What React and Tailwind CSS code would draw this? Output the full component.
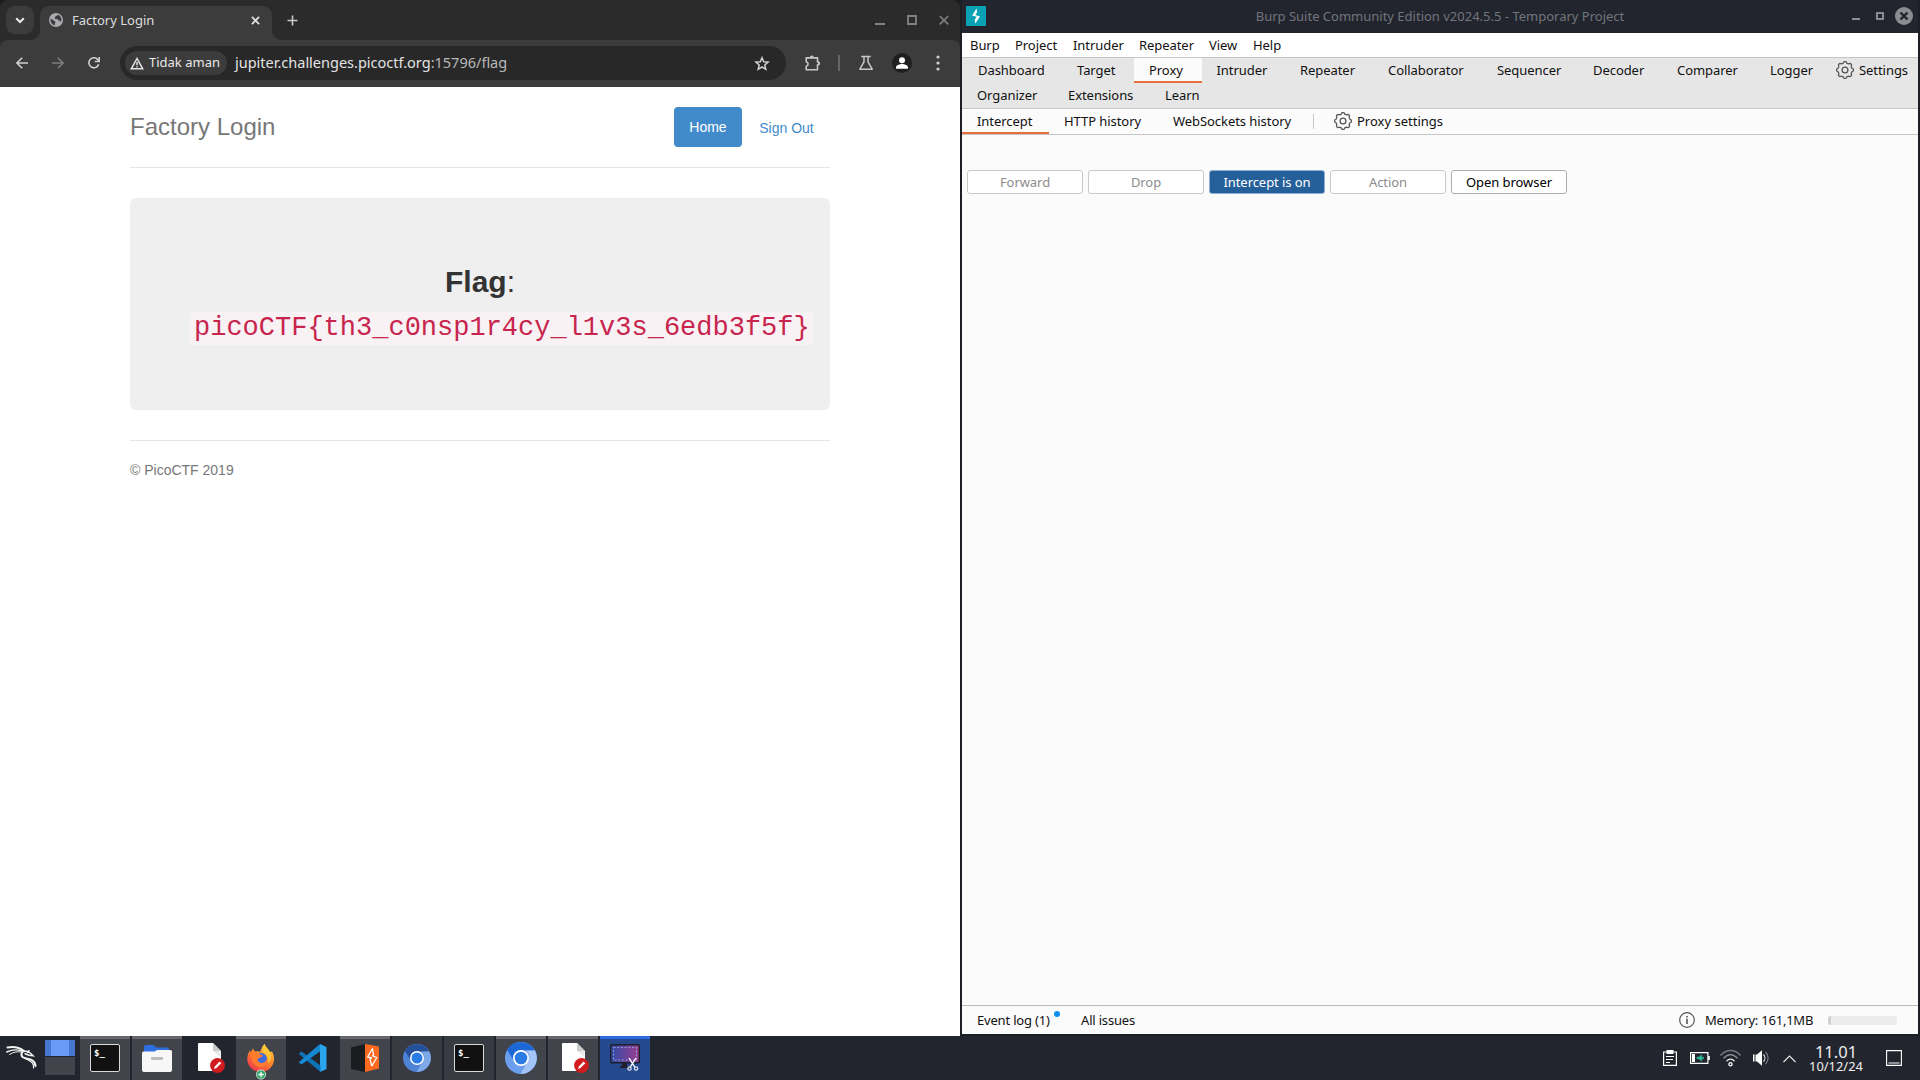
import React from "react";

const NOTO = "font-['Noto_Sans',sans-serif]";
const HELV = "font-['Liberation_Sans',sans-serif]";

function Gear() {
  const pts = [];
  const n = 96;
  for (let i = 0; i <= n; i++) {
    const a = (i / n) * Math.PI * 2;
    const s = Math.cos(a * 8);
    const r = 7.7 + Math.max(-1, Math.min(1, s * 1.6)) * 0.7;
    pts.push(`${(9 + r * Math.cos(a)).toFixed(2)},${(9 + r * Math.sin(a)).toFixed(2)}`);
  }
  return (
    <svg width="18" height="18" viewBox="0 0 18 18" fill="none" stroke="#555" strokeWidth="1.3" className="shrink-0">
      <polygon points={pts.join(" ")} strokeLinejoin="round" />
      <circle cx="9" cy="9" r="2.9" />
    </svg>
  );
}

function TabStrip() {
  return (
    <div className="flex h-10 rounded-t-lg bg-[#2b2b2b] pt-[6px]">
      <div className="ml-[6px] flex size-7 items-center justify-center rounded-[9px] bg-[#3c3c3c]">
        <svg width="10" height="7" viewBox="0 0 10 7" fill="none" stroke="#e8e8e8" strokeWidth="2">
          <path d="M1.2 1.2 5 5l3.8-3.8" />
        </svg>
      </div>
      <div className="relative ml-[6px] flex h-[34px] w-[232px] items-center rounded-t-[9px] bg-[#3c3c3c] pb-[6px]">
        <svg className="absolute bottom-0 left-[-9px]" width="9" height="9" viewBox="0 0 9 9">
          <path d="M9 0v9H0A9 9 0 0 0 9 0z" fill="#3c3c3c" />
        </svg>
        <svg className="absolute right-[-9px] bottom-0" width="9" height="9" viewBox="0 0 9 9">
          <path d="M0 0v9h9A9 9 0 0 1 0 0z" fill="#3c3c3c" />
        </svg>
        <svg className="ml-[9px] shrink-0" width="14" height="14" viewBox="0 0 14 14">
          <circle cx="7" cy="7" r="7" fill="#a9abae" />
          <path d="M1.4 6.3c2.2 0 2.1.2 3.2 1.3.8.8 1.7.4 1.8 1.4 0 1-.6 1.100-.6 1.900v1.500C3 11.600 1.300 9.300 1.400 6.300zM8.800 1.700c-.3 1.300-1 1-1.900 1.200-.9.300-.3 1.300-1 1.800-.5.400-.1 1.200.6 1.200 1.400-.1 2.300.100 2.700 1 .4.900 1.300.4 2 .8.600.300.500 1.200.200 2.100 2-2.700 1.200-6.900-2.600-8.100z" fill="#3c3c3c" />
        </svg>
        <span className="ml-[9px] w-[179px] pb-px text-[13px] leading-5 text-[#dedede]">Factory Login</span>
        <svg className="shrink-0" width="9" height="9" viewBox="0 0 9 9" stroke="#e3e3e3" strokeWidth="1.700">
          <path d="M.9.9l7.200 7.200M8.100.9.9 8.100" />
        </svg>
      </div>
      <svg className="mt-[9px] ml-[14.500px]" width="11" height="11" viewBox="0 0 11 11" stroke="#c9c9c9" strokeWidth="1.600">
        <path d="M5.500.5v10M.5 5.500h10" />
      </svg>
      <div className="mt-[8px] mr-[11px] ml-auto flex gap-[22px]">
        <svg width="10" height="11" viewBox="0 0 10 11"><path d="M0 9h10v2H0z" fill="#818181" /></svg>
        <svg width="10" height="11" viewBox="0 0 10 11"><path d="M1 2h8v8H1z" fill="none" stroke="#818181" strokeWidth="1.800" /></svg>
        <svg width="10" height="11" viewBox="0 0 10 11"><path d="M.8 2l8.400 8.400M9.200 2 .8 10.400" stroke="#818181" strokeWidth="1.700" /></svg>
      </div>
    </div>
  );
}

function Toolbar() {
  return (
    <div className="bg-[#2b2b2b]">
    <div className="flex h-[47px] items-center rounded-t-lg bg-[#3c3c3c] pb-px">
      <svg className="ml-4 shrink-0" width="12" height="12" viewBox="0 0 12 12" fill="none" stroke="#d0d0d0" strokeWidth="1.600">
        <path d="M12 6H1M6.200.7.9 6l5.300 5.300" />
      </svg>
      <svg className="ml-6 shrink-0" width="12" height="12" viewBox="0 0 12 12" fill="none" stroke="#7d7d7d" strokeWidth="1.600">
        <path d="M0 6h11M5.800.7 11.100 6l-5.300 5.300" />
      </svg>
      <svg className="ml-6 shrink-0" width="12" height="12" viewBox="0 0 12 12" fill="none" stroke="#d0d0d0" strokeWidth="1.600">
        <path d="M10.700 7.200A5 5 0 1 1 9.600 2.400L11 4.100" />
        <path d="M11.200 0v4.500H6.700" />
      </svg>
      <div className="ml-5 flex h-[34px] w-[666px] items-center rounded-full bg-[#282828] pr-4 pl-[5px]">
        <div className="flex h-6 w-[102px] shrink-0 items-center rounded-full bg-[#3c3c3c] pl-[5px]">
          <svg className="shrink-0" width="14" height="13" viewBox="0 0 14 13" fill="none" stroke="#e3e3e3" strokeWidth="1.500">
            <path d="M7 1.500 1.300 11.800h11.400z" />
            <path d="M7 5v3.300M7 9.200v1.300" />
          </svg>
          <span className="ml-[5px] text-[13px] whitespace-nowrap text-[#e8e8e8]">Tidak aman</span>
        </div>
        <span className="ml-2 text-[14.500px] whitespace-nowrap text-[#e3e3e3]">
          jupiter.challenges.picoctf.org<span className="text-[#b9b9b9]">:15796/flag</span>
        </span>
        <svg className="ml-auto shrink-0" width="16" height="15" viewBox="0 0 16 15" fill="none" stroke="#d0d0d0" strokeWidth="1.500">
          <path d="M8 1.700l1.700 4 4.400.4-3.300 2.900 1 4.300L8 11l-3.800 2.300 1-4.300L1.900 6.100l4.400-.4z" />
        </svg>
      </div>
      <svg className="ml-[18px] shrink-0" width="18" height="18" viewBox="0 0 18 18">
        <path d="M2.200 3.900h11.300v4c2 0 2.200 2.900 0 3v4.900H2.200v-3.600c2.500-.6 2.500-3.900 0-4.500z" fill="none" stroke="#c7c7c7" strokeWidth="1.600" strokeLinejoin="round" />
        <path d="M5.800 3.500a2 2 0 0 1 4 0zM14 7.500a2 2 0 0 1 0 4z" fill="#c7c7c7" />
      </svg>
      <div className="ml-[16px] h-4 w-[1.500px] bg-[#666]" />
      <svg className="ml-[18px] shrink-0" width="16" height="16" viewBox="0 0 16 16" fill="none" stroke="#c7c7c7" strokeWidth="1.500">
        <path d="M3.200 1.500h9.600M6 1.500v5.300L1.800 14.200h12.400L10 6.800V1.500" strokeLinejoin="round" />
      </svg>
      <svg className="ml-[18px] shrink-0" width="20" height="20" viewBox="0 0 20 20">
        <circle cx="10" cy="10" r="10" fill="#1f1f1f" />
        <circle cx="10" cy="7.200" r="3" fill="#fff" />
        <path d="M4 15.700v-1.400c0-2 3.600-3.300 6-3.300s6 1.300 6 3.300v1.400z" fill="#fff" />
      </svg>
      <svg className="ml-6 shrink-0" width="4" height="16" viewBox="0 0 4 16" fill="#d0d0d0">
        <circle cx="2" cy="2" r="1.600" /><circle cx="2" cy="8" r="1.600" /><circle cx="2" cy="14" r="1.600" />
      </svg>
    </div>
    </div>
  );
}

function Page() {
  return (
    <div className={`${HELV} flex-1 bg-white px-[130px] pt-5 text-sm leading-5`}>
      <div className="flex h-[61px] border-b border-[#e5e5e5]">
        <h3 className="mt-[7px] text-2xl leading-[26px] text-[#777]">Factory Login</h3>
        <div className="ml-auto flex">
          <a className="flex h-10 w-[68px] items-center justify-center rounded bg-[#428bca] text-white">Home</a>
          <a className="mt-px flex h-10 w-[88px] items-center justify-center pl-px text-[#428bca]">Sign Out</a>
        </div>
      </div>
      <div className="mt-[30px] h-[212px] rounded-md bg-[#efefef] px-[60px] pt-[61px] text-[#333]">
        <p className="text-center text-3xl leading-[45px]"><strong>Flag</strong>:</p>
        <div className="mt-[8px] flex text-[27px] leading-[45px]">
          <code className="h-[33px] rounded bg-[#f9f2f4] px-1 font-['Liberation_Mono',monospace] leading-[33px] whitespace-nowrap text-[#c7254e]">
            {"picoCTF{th3_c0nsp1r4cy_l1v3s_6edb3f5f}"}
          </code>
        </div>
      </div>
      <footer className="mt-[30px] border-t border-[#e5e5e5] pt-[19px] text-[#777]">© PicoCTF 2019</footer>
    </div>
  );
}

function Browser() {
  return (
    <section className="flex h-[1036px] w-[960px] shrink-0 flex-col overflow-hidden bg-[#1c1d21]">
      <TabStrip />
      <Toolbar />
      <Page />
    </section>
  );
}

const MENU = [
  ["Burp", "w-[45px]"], ["Project", "w-[58px]"], ["Intruder", "w-[66px]"],
  ["Repeater", "w-[70px]"], ["View", "w-[44px]"], ["Help", "w-[40px]"],
];
const TABS1 = [
  ["Dashboard", "w-[99px]"], ["Target", "w-[57px]"], ["Proxy", ""], ["Intruder", "ml-[14.500px] w-[83.500px]"],
  ["Repeater", "w-[88px]"], ["Collaborator", "w-[109px]"], ["Sequencer", "w-[96px]"],
  ["Decoder", "w-[84px]"], ["Comparer", "w-[93px]"], ["Logger", "w-[75px]"],
];
const BUTTONS = [
  ["Forward", "border-[#c9c9c9] bg-white text-[#8c8c8c]"],
  ["Drop", "border-[#c9c9c9] bg-white text-[#8c8c8c]"],
  ["Intercept is on", "border-[#8fb0d0] bg-[#26609b] text-white"],
  ["Action", "border-[#c9c9c9] bg-white text-[#8c8c8c]"],
  ["Open browser", "border-[#adadad] bg-white text-black"],
];

function Burp() {
  return (
    <section className="flex h-[1036px] w-[960px] shrink-0 flex-col bg-[#1c1f24] pr-[2px] pb-[2px] pl-[2px] text-[13px] leading-[18px] tracking-[-0.06px] whitespace-nowrap text-[#111]">
      <header className="flex h-[33px] shrink-0 bg-[#22252d]">
        <svg className="mt-[6px] ml-[4px] shrink-0" width="20" height="20" viewBox="0 0 20 20">
          <path d="M0 0h20v20H0z" fill="#0aa1b5" />
          <path d="M10.500 2.500 6.200 9.600l4.400 1.200-1.800 3 .4 3.700 4.800-7.100-4.700-1.400 1.800-2.700z" fill="#fff" />
        </svg>
        <div className="flex flex-1 justify-center pt-[7px] tracking-normal text-[#71757c]">
          <span className="ml-[43px]">Burp Suite Community Edition v2024.5.5 - Temporary Project</span>
        </div>
        <svg className="mt-[7px] mr-[5px] shrink-0" width="62" height="18" viewBox="0 0 62 18">
          <path d="M1 11h8v2H1z" fill="#8b8d91" />
          <path d="M26 6h6v6h-6z" fill="none" stroke="#8b8d91" strokeWidth="2" />
          <circle cx="53" cy="9" r="9" fill="#8b8d91" />
          <path d="M49.500 5.500l7 7M56.500 5.500l-7 7" stroke="#22252d" strokeWidth="2.400" />
        </svg>
      </header>
      <nav className="flex h-6 shrink-0 bg-white pt-[3px] pl-2">
        {MENU.map(([t, w]) => <span key={t} className={w}>{t}</span>)}
      </nav>
      <div className="h-[51px] shrink-0 border-t border-[#c6c6c6] bg-[#e6e6e6]">
        <div className="flex h-[25px] pl-4">
          {TABS1.map(([t, w]) =>
            t === "Proxy"
              ? <span key={t} className="h-[25px] w-[68px] border-b-2 border-[#e4703f] bg-[#fbfbfb] pt-[3px] pl-[15px]">{t}</span>
              : <span key={t} className={`${w} pt-[3px]`}>{t}</span>
          )}
          <span className="ml-[-9px] flex gap-[5px] pt-[3px]"><Gear />Settings</span>
        </div>
        <div className="flex pt-[3px] pl-[15px]">
          <span className="w-[91px]">Organizer</span>
          <span className="w-[97px]">Extensions</span>
          <span>Learn</span>
        </div>
      </div>
      <div className="flex h-[27px] shrink-0 border-y border-[#c6c6c6] bg-[#fbfbfb]">
        <span className="h-[25px] w-[87px] border-b-2 border-[#e4703f] pt-[3px] pl-[15px]">Intercept</span>
        <span className="ml-[15px] w-[109px] pt-[3px]">HTTP history</span>
        <span className="w-[140px] pt-[3px]">WebSockets history</span>
        <span className="mt-[5px] h-[15px] w-px bg-[#c6c6c6]" />
        <span className="ml-5 flex gap-[5px] pt-[3px] tracking-normal"><Gear />Proxy settings</span>
      </div>
      <div className="flex-1 bg-[#fbfbfb] pt-[35px] pl-[5px]">
        <div className="flex gap-[5px]">
          {BUTTONS.map(([t, c]) => (
            <div key={t} className={`${c} flex h-6 w-[116px] items-center justify-center rounded-[3px] border`}>{t}</div>
          ))}
        </div>
      </div>
      <footer className="flex h-[29px] shrink-0 items-center border-t border-[#b8b8b8] bg-[#fbfbfb] pl-[15px] tracking-[-0.18px]">
        <span className="w-[77px]">Event log (1)</span>
        <span className="mb-3 size-[6px] rounded-full bg-[#0d8eee]" />
        <span className="ml-[21px]">All issues</span>
        <svg className="ml-auto shrink-0" width="16" height="16" viewBox="0 0 16 16">
          <circle cx="8" cy="8" r="7.300" fill="none" stroke="#555" strokeWidth="1.200" />
          <path d="M7.200 6.800h1.600V12H7.200zM7.200 4h1.600v1.600H7.200z" fill="#555" />
        </svg>
        <span className="ml-[10px] w-[123px] tracking-[-0.22px]">Memory: 161,1MB</span>
        <span className="mr-[21px] flex h-[9px] w-[69px] overflow-hidden rounded-[3px] bg-[#ececec]">
          <span className="h-full w-[3px] bg-[#d0d0d0]" />
        </span>
      </footer>
    </section>
  );
}

function Terminal() {
  return (
    <div className="h-[28px] w-[30px] rounded-[2px] border-[1.500px] border-[#d8d8d8] bg-[#111] pt-[3px] pl-[3px] font-['DejaVu_Sans_Mono',monospace] text-[9px] leading-[11px] font-bold text-white">$_</div>
  );
}

function Files() {
  return (
    <svg width="30" height="27" viewBox="0 0 30 27">
      <path d="M2 2q0-2 2-2h7q1 0 2 1l1 1.500h11q2 0 2 2V9H2z" fill="#2e6fe0" />
      <path d="M0 8q0-1.500 1.500-1.500h11L15 5h13.500Q30 5 30 6.500V25q0 2-2 2H2q-2 0-2-2z" fill="#f7f7f7" />
      <path d="M9 12h12v1.500q0 1.500-1.500 1.500h-9Q9 15 9 13.500z" fill="#bcbcbc" />
    </svg>
  );
}

function Editor() {
  return (
    <svg className="ml-[4px]" width="28" height="30" viewBox="0 0 28 30">
      <path d="M2 0h14l8 8v20H2q-1 0-1-1V1q0-1 1-1z" fill="#fff" />
      <path d="M16 0l7.500 8H16z" fill="#ccc" />
      <path d="M16 8h7.500v6z" fill="#e8e8e8" />
      <circle cx="20.500" cy="22.500" r="7.400" fill="#d01b1f" />
      <path d="M17 26l.8-2.600 4.800-4.800 1.700 1.700-4.800 4.800z" fill="#fff" />
    </svg>
  );
}

function Firefox() {
  return (
    <svg width="30" height="36" viewBox="0 0 30 36">
      <defs>
        <linearGradient id="ff" x1="0.800" y1="0" x2="0.200" y2="1">
          <stop offset="0" stopColor="#ffd23e" /><stop offset=".45" stopColor="#ff8a2a" /><stop offset="1" stopColor="#f0304f" />
        </linearGradient>
      </defs>
      <path d="M18.500 0c1 3.500 4 4.800 5.500 8l2-.5c2.500 4 2.800 9.500.5 13.500C24 25.500 19.500 28 15 28 7.500 28 1.300 22.500 1.300 14.800c0-3.500 1.200-6.300 2.700-8.800l.5 2.800L7 4.500l2 3.200c2-.8 4-.5 5 .300 1.500-3 2-6 4.500-8z" fill="url(#ff)" />
      <circle cx="15" cy="15" r="6" fill="#3e6be0" />
      <path d="M5 10c3-2 7-2 9 .5l3 1c-1 2-3.500 2-5 3-1 1.500.5 4.500 3 4.500 3 0 5-1.500 6-4 .5 5-3 8-7 8S5 19 5 10z" fill="#ff7b2d" />
      <path d="M18.500 0c1 3.500 4 4.800 5.500 8 2 5 .5 9-2 11 .5-5-1-8-4-10-2.500-2.500-2-6 .5-9z" fill="#ffc737" />
      <circle cx="15" cy="30.500" r="4.600" fill="#30a566" stroke="#e8f5ee" strokeWidth=".8" />
      <path d="M15 27.800v5.400M12.300 30.500h5.400" stroke="#fff" strokeWidth="1.300" />
    </svg>
  );
}

function Code() {
  return (
    <svg width="28" height="28" viewBox="0 0 28 28">
      <path d="M21 0l6.500 3v22L21 28z" fill="#2aa5ee" />
      <path d="M0 9.500 2.500 7.500 21.500 21.500V28L.5 10.500z" fill="#0d72b8" />
      <path d="M0 18l21-18v7.500L2.500 20.500 0 18.500z" fill="#1688d3" />
    </svg>
  );
}

function BurpIcon() {
  return (
    <svg width="28" height="28" viewBox="0 0 28 28">
      <path d="M0 3.500 14 0v28L0 25z" fill="#1b1c20" />
      <path d="M14 0l14 2.500v22L14 28z" fill="#ff6a20" />
      <path d="M21.500 4.500 16.500 13l4.500 1-2 .8 1.800 7.200 5-8.500-4.300-1.700 1-.6z" fill="none" stroke="#fff" strokeWidth="1.300" strokeLinejoin="bevel" />
    </svg>
  );
}

function Chromium({ size, dark, mid, light }) {
  return (
    <svg width={size} height={size} viewBox="0 0 32 32">
      <circle cx="16" cy="16" r="16" fill={mid} />
      <path d="M2.100 8A16 16 0 0 1 29.900 8.500H16a7.500 7.500 0 0 0-6.600 11z" fill={dark} />
      <path d="M29.900 8.500A16 16 0 0 1 15.500 32l7-12.300a7.500 7.500 0 0 0-1.500-11.200z" fill={light} />
      <circle cx="16" cy="16" r="8" fill="#fff" />
      <circle cx="16" cy="16" r="6.300" fill="#2b7be4" />
    </svg>
  );
}

function Capture() {
  return (
    <svg width="30" height="28" viewBox="0 0 30 28">
      <defs>
        <linearGradient id="scr" x1="0" y1="0" x2="1" y2="0">
          <stop offset="0" stopColor="#2f4da8" /><stop offset="1" stopColor="#9c3d8f" />
        </linearGradient>
      </defs>
      <rect x=".7" y=".7" width="28.600" height="18" rx="1" fill="url(#scr)" stroke="#1e1f2b" strokeWidth="1.400" />
      <rect x="3.500" y="3.500" width="23" height="12.500" fill="none" stroke="#8d97d6" strokeWidth="1" strokeDasharray="2 1.700" />
      <path d="M12 19h5v3h2v2h-9v-2h2z" fill="#1e1f2b" />
      <path d="M19 14l6 9.500M26 14l-6 9.500" stroke="#fff" strokeWidth="1.400" />
      <circle cx="19.500" cy="24.500" r="1.700" fill="none" stroke="#dfe3f5" strokeWidth="1.200" />
      <circle cx="26" cy="24.500" r="1.700" fill="none" stroke="#dfe3f5" strokeWidth="1.200" />
    </svg>
  );
}

const OPEN = "border-[#66676f] bg-[#42444b]";
const MINIMIZED = "border-[#393b43] bg-[#393b43]";
const NONE = "border-[#23252e] bg-[#23252e]";
const TASKS = [
  [OPEN, <Terminal />], [OPEN, <Files />], [NONE, <Editor />], [OPEN, <div className="mt-2"><Firefox /></div>],
  [NONE, <Code />], [OPEN, <BurpIcon />],
  [MINIMIZED, <Chromium size={28} dark="#234f9b" mid="#4e83d6" light="#7fa8e6" />],
  [MINIMIZED, <Terminal />],
  [OPEN, <Chromium size={32} dark="#1b67d6" mid="#6b9eec" light="#a4c3f7" />],
  [OPEN, <Editor />],
  ["border-[#2f6be0] bg-[#24498c]", <Capture />],
];

function Taskbar() {
  return (
    <footer className="flex h-11 w-[1920px] bg-[#23252e]">
      <svg className="mt-[9px] ml-[6px] shrink-0" width="31" height="26" viewBox="0 0 31 26" fill="none" stroke="#f2f2f2" strokeLinecap="round">
        <path d="M1.500 2.500C8 1.200 13 2.200 18 6" strokeWidth="1.900" />
        <path d="M.8 7C6 4.500 12 4.200 18 6.500" strokeWidth="1.400" />
        <path d="M3.500 9.500C7 7 11 6.300 16 7" strokeWidth="1" />
        <path d="M17 6c-1.500 2-2.500 4-.5 6 2.500 2 7 1.500 10 3.500 2 1.500 3 3.500 3 5.500" strokeWidth="2" />
        <path d="M19 13.500c3 1 5 2.500 7 4 1.500 1.500 1.800 3 1.600 5.500" strokeWidth="1.200" />
        <path d="M17.500 6c2.500 0 5 .5 7 2.200l2.500 2.600-4-.6-4-1.500M21.500 7.500l1.500-1.800" strokeWidth="1.500" />
      </svg>
      <div className="mt-[4px] ml-[8px] flex w-[30px] shrink-0 flex-col gap-px">
        <div className="flex h-4 justify-center bg-[#4477cf]"><div className="h-full w-[18px] bg-[#6a9bf4]" /></div>
        <div className="h-[18px] bg-[#42444b]" />
      </div>
      <div className="ml-[5px] flex gap-[2px]">
        {TASKS.map(([c, icon], i) => (
          <div key={i} className={`${c} flex h-11 w-[50px] items-center justify-center border-t-3 pb-[3px]`}>{icon}</div>
        ))}
      </div>
      <div className="ml-auto flex text-white">
        <svg className="mt-[14px]" width="14" height="16" viewBox="0 0 14 16" fill="none" stroke="#fff">
          <path d="M.6 2h12.800v13.400H.6z" strokeWidth="1.200" />
          <path d="M3.500 0h7v4h-7z" fill="#fff" stroke="none" />
          <path d="M3 6.500h8M3 9.500h7M3 12.500h4" strokeWidth="1.200" />
        </svg>
        <svg className="mt-[16px] ml-[13px]" width="20" height="12" viewBox="0 0 20 12">
          <path d="M.6.6h17.300v10.800H.6z" fill="none" stroke="#fff" strokeWidth="1.200" />
          <path d="M2 2h3v8H2zM18 4h1.800v4H18z" fill="#fff" />
          <path d="M7 5.200h2L11.500 3v2.200h2v1.600h-2V9L9 6.800H7z" fill="#2cbf9b" stroke="#2cbf9b" strokeWidth=".7" />
        </svg>
        <svg className="mt-[13px] ml-[10px]" width="21" height="18" viewBox="0 0 21 18" fill="none" strokeWidth="1.300">
          <path d="M.5 6.500C6-.2 15-.2 20.500 6.500" stroke="#777982" />
          <path d="M3.500 9.300C8 4.300 13 4.300 17.500 9.300" stroke="#8e9097" />
          <path d="M6.500 12.200c2.600-2.700 5.400-2.700 8 0" stroke="#e8e8e8" />
          <circle cx="10.500" cy="15.300" r="1.600" stroke="#fff" />
        </svg>
        <svg className="mt-[14px] ml-[12px]" width="17" height="16" viewBox="0 0 17 16" fill="none">
          <path d="M0 4.500h1.500v7H0zM2.500 4.500H4L9 .3v15.400L4 11.500H2.500z" fill="#fff" />
          <path d="M10.500 4.500c1.800 2 1.800 5 0 7" stroke="#ddd" strokeWidth="1.200" />
          <path d="M12.500 2c3.500 3.300 3.500 8.700 0 12" stroke="#7c7e86" strokeWidth="1.200" />
        </svg>
        <svg className="mt-[19px] ml-[13px]" width="13" height="8" viewBox="0 0 13 8" fill="none" stroke="#e8e8e8" strokeWidth="1.100">
          <path d="M.5 7 6.500 1l6 6" />
        </svg>
        <div className="ml-[11px] flex w-[58px] flex-col items-center pt-[7px] whitespace-nowrap text-[#ededed]">
          <span className="text-[16.500px] leading-[18px]">11.01</span>
          <span className="text-[12.900px] leading-[11px]">10/12/24</span>
        </div>
        <svg className="mt-[14px] mr-[18px] ml-[21px]" width="16" height="16" viewBox="0 0 16 16" fill="none" stroke="#fff" strokeWidth="1.100">
          <path d="M.6.6h14.800v14.800H.6zM2.500 13h11" />
        </svg>
      </div>
    </footer>
  );
}

export default function App() {
  return (
    <main className={`${NOTO} h-[1080px] w-[1920px] overflow-hidden bg-[#23252e]`}>
      <div className="flex">
        <Browser />
        <Burp />
      </div>
      <Taskbar />
    </main>
  );
}
